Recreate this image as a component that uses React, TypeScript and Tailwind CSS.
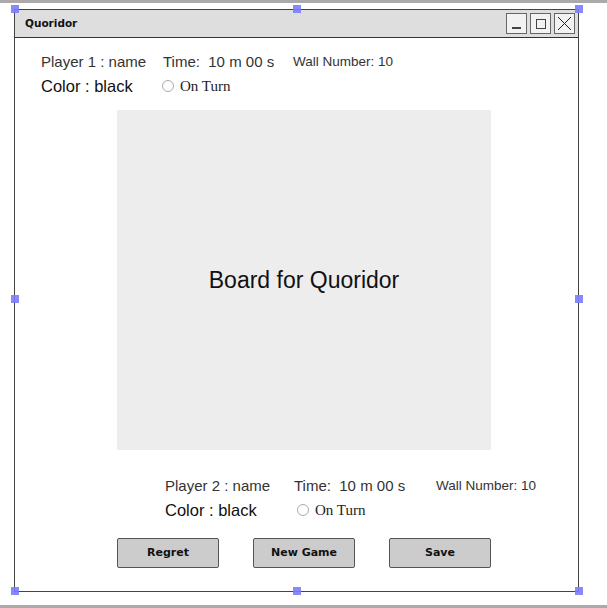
import React from "react";

const handle = "absolute w-[8px] h-[8px] bg-[#7b7bff] opacity-90";

function WinButton({ children }: { children: React.ReactNode }) {
  return (
    <div className="w-[21px] h-[21px] border-[1.5px] border-[#666] bg-[#f2f2f2] flex items-center justify-center">
      {children}
    </div>
  );
}

function PlayerInfo({
  n,
  w1,
  w2,
  w3,
}: {
  n: number;
  w1: string;
  w2: string;
  w3: string;
}) {
  return (
    <div className="flex flex-col gap-[6px] text-[#222]">
      <div className="flex items-center h-[18px]">
        <span className={`${w1} text-[15px] font-['Liberation_Sans',sans-serif] text-[#333]`}>
          Player {n} : name
        </span>
        <span className={`${w2} text-[15px] whitespace-pre font-['Liberation_Sans',sans-serif] text-[#333]`}>
          Time:  10 m 00 s
        </span>
        <span className="text-[13.5px] font-['Liberation_Sans',sans-serif] text-[#333]">
          Wall Number: 10
        </span>
      </div>
      <div className="flex items-center h-[18px]">
        <span className={`${w3} text-[16.5px] font-['Liberation_Sans',sans-serif] text-[#111]`}>
          Color : black
        </span>
        <span className="w-[12px] h-[12px] rounded-full border border-[#aaa] bg-white mr-[6px]" />
        <span className="text-[15px] font-['Liberation_Serif',serif] text-[#222]">On Turn</span>
      </div>
    </div>
  );
}

function Btn({ label }: { label: string }) {
  return (
    <button className="w-[102px] h-[30px] bg-[#cccccc] border-[1.5px] border-[#555] rounded-[2px] text-[11px] font-bold font-['DejaVu_Sans',sans-serif] text-[#111]">
      {label}
    </button>
  );
}

export default function App() {
  return (
    <div className="w-[607px] h-[608px] bg-white relative overflow-hidden">
      <div className="h-[3px] bg-[#aaaaaa]" />
      <div className="ml-[14px] mt-[6px] w-[565px] h-[583px] border border-[#444] flex flex-col">
        <div className="h-[28px] bg-[#dedede] border-b-[1.5px] border-[#333] flex items-center pl-[10px] pr-[3px]">
          <span className="text-[10.5px] font-bold font-['DejaVu_Sans',sans-serif] text-[#111] flex-1">
            Quoridor
          </span>
          <div className="flex gap-[3px]">
            <WinButton>
              <span className="w-[9px] h-[1.5px] bg-[#444] mt-[9px]" />
            </WinButton>
            <WinButton>
              <span className="w-[10px] h-[10px] border-[1.5px] border-[#444]" />
            </WinButton>
            <WinButton>
              <svg width="15" height="15" viewBox="0 0 15 15">
                <path d="M1 1L14 14M14 1L1 14" stroke="#222" strokeWidth="1" />
              </svg>
            </WinButton>
          </div>
        </div>

        <div className="pl-[26px] pt-[15px]">
          <PlayerInfo n={1} w1="w-[122px]" w2="w-[130px]" w3="w-[121px]" />
        </div>

        <div className="ml-[102px] mt-[15px] w-[374px] h-[340px] bg-[#ededed] flex items-center justify-center">
          <span className="text-[23px] font-['Liberation_Sans',sans-serif] text-[#111]">
            Board for Quoridor
          </span>
        </div>

        <div className="pl-[150px] pt-[27px]">
          <PlayerInfo n={2} w1="w-[129px]" w2="w-[142px]" w3="w-[132px]" />
        </div>

        <div className="ml-[102px] mt-[19px] flex gap-[34px]">
          <Btn label="Regret" />
          <Btn label="New Game" />
          <Btn label="Save" />
        </div>
      </div>
      <div className="absolute left-0 right-0 top-[605px] h-[3px] bg-[#aaaaaa]" />

      <span className={`${handle} left-[11px] top-[5px]`} />
      <span className={`${handle} left-[293px] top-[5px]`} />
      <span className={`${handle} left-[575px] top-[5px]`} />
      <span className={`${handle} left-[11px] top-[295px]`} />
      <span className={`${handle} left-[575px] top-[295px]`} />
      <span className={`${handle} left-[11px] top-[587px]`} />
      <span className={`${handle} left-[293px] top-[587px]`} />
      <span className={`${handle} left-[575px] top-[587px]`} />
    </div>
  );
}
